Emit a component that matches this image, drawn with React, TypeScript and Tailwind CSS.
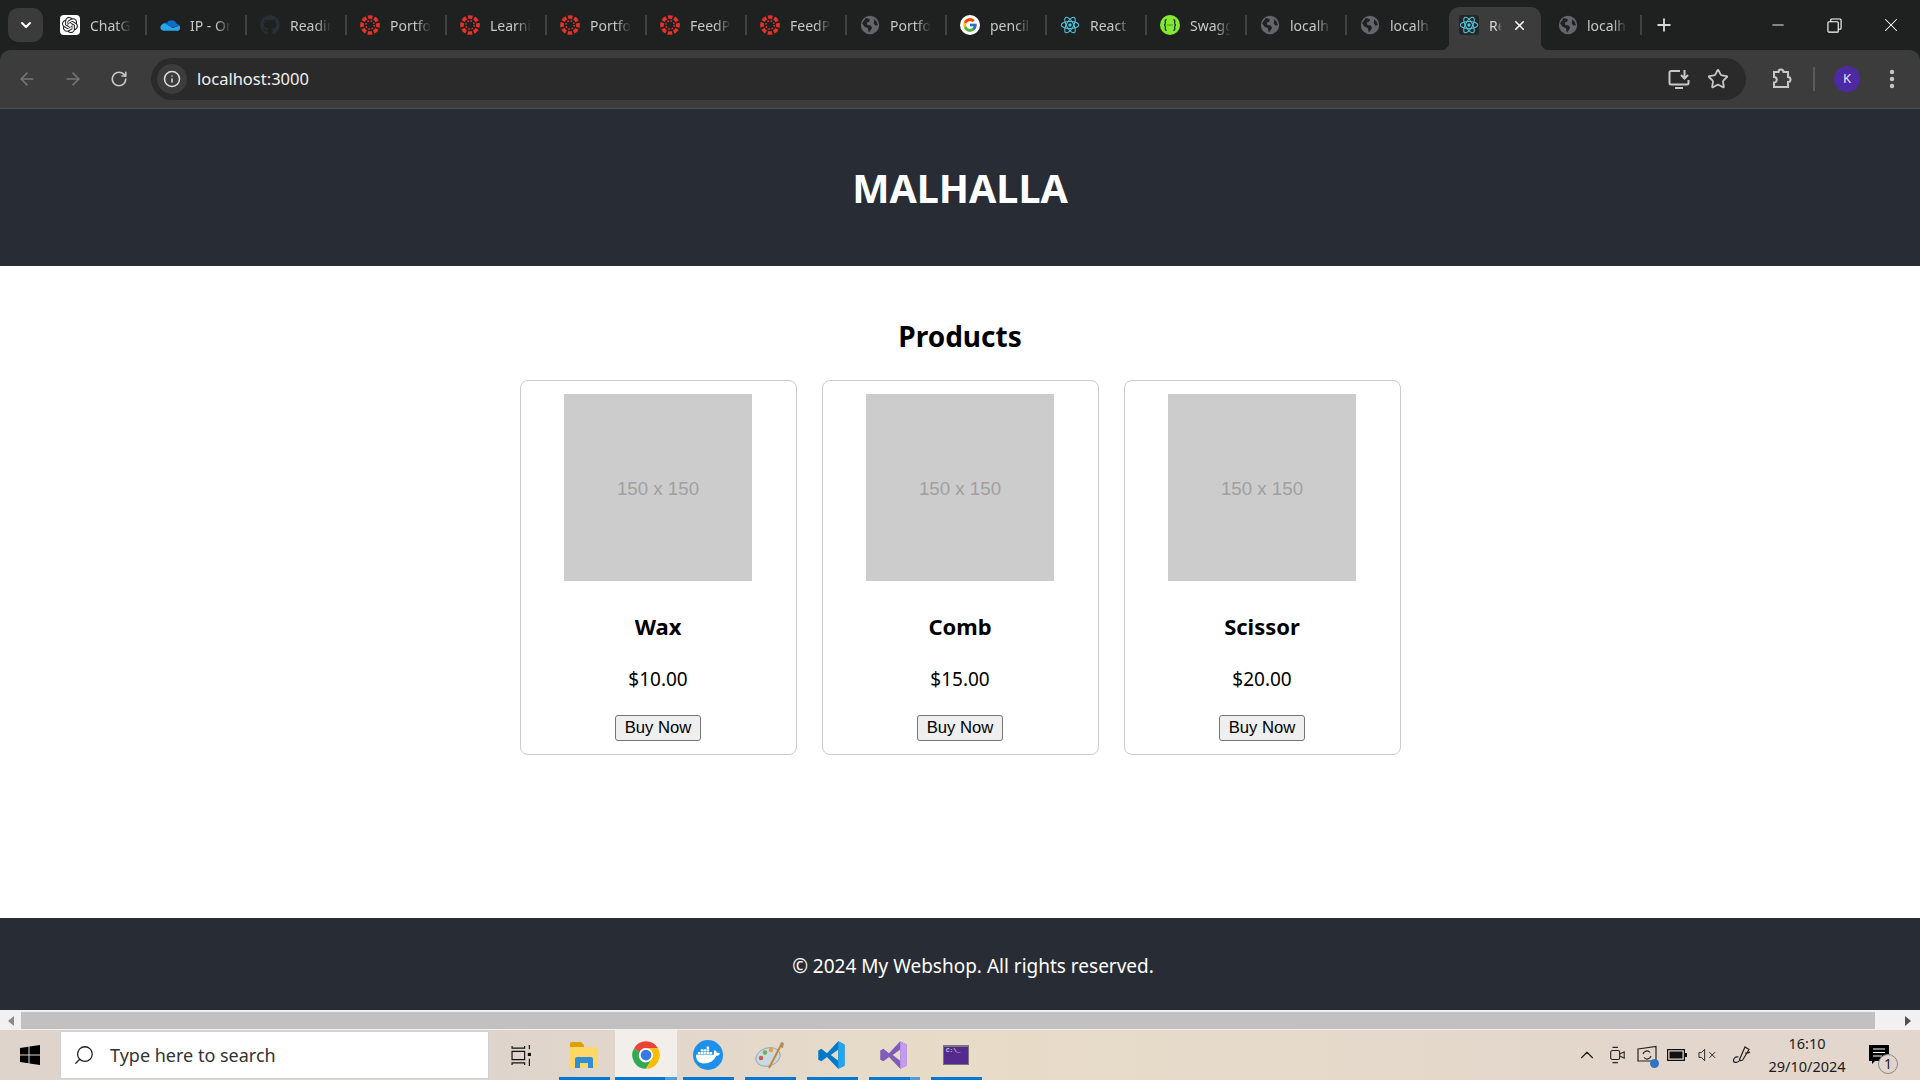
import React from "react";
import { ArrowLeft, ArrowRight, RotateCw, Info, Star, MoreVertical, X, Plus, Minus, ChevronDown, ChevronUp, Search } from "lucide-react";
import { FaDocker, FaGithub } from "react-icons/fa";
import { FcGoogle } from "react-icons/fc";
import { SiOpenai } from "react-icons/si";

type Fav = "gpt" | "onedrive" | "github" | "canvas" | "globe" | "google" | "react" | "swagger";

// labels are what the strip has room for, the rest fades out
const tabs: { label: string; icon: Fav }[] = [
  { label: "ChatG", icon: "gpt" },
  { label: "IP - Or", icon: "onedrive" },
  { label: "Readin", icon: "github" },
  { label: "Portfol", icon: "canvas" },
  { label: "Learnin", icon: "canvas" },
  { label: "Portfol", icon: "canvas" },
  { label: "FeedP", icon: "canvas" },
  { label: "FeedP", icon: "canvas" },
  { label: "Portfol", icon: "globe" },
  { label: "pencil", icon: "google" },
  { label: "React", icon: "react" },
  { label: "Swagg", icon: "swagger" },
  { label: "localh", icon: "globe" },
  { label: "localh", icon: "globe" },
];

const products = [
  { name: "Wax", price: "$10.00" },
  { name: "Comb", price: "$15.00" },
  { name: "Scissor", price: "$20.00" },
];

function ReactIcon() {
  return (
    <svg viewBox="0 0 24 24" className="w-5 h-5" fill="none" stroke="#4fc3dc" strokeWidth="1.3">
      <ellipse cx="12" cy="12" rx="10.5" ry="4.2" />
      <ellipse cx="12" cy="12" rx="10.5" ry="4.2" transform="rotate(60 12 12)" />
      <ellipse cx="12" cy="12" rx="10.5" ry="4.2" transform="rotate(120 12 12)" />
      <circle cx="12" cy="12" r="2" fill="#4fc3dc" stroke="none" />
    </svg>
  );
}

function Favicon({ icon }: { icon: Fav }) {
  if (icon === "gpt") {
    return (
      <div className="w-5 h-5 rounded-[4px] bg-white flex items-center justify-center">
        <SiOpenai className="w-4 h-4 text-[#222]" />
      </div>
    );
  }
  if (icon === "onedrive") {
    return (
      <svg viewBox="0 0 24 24" className="w-5 h-5">
        <path d="M9 8.5a6.5 6.5 0 0 1 11 2.2 4 4 0 0 1 3.5 2.3L14 15 8 11z" fill="#0f6cc9" />
        <path d="M8.5 9a5 5 0 0 0-6 4.5 4 4 0 0 0-2 2.5L11 14z" fill="#0a5fb8" />
        <path d="M6 10.2l9 5.3 8.6-2.6A3.8 3.8 0 0 1 20 19H4.5A4.4 4.4 0 0 1 .5 15.5 5 5 0 0 1 6 10.2z" fill="#28a8ea" />
      </svg>
    );
  }
  if (icon === "github") return <FaGithub className="w-5 h-5 text-[#2a2f36]" />;
  if (icon === "canvas") {
    return (
      <svg viewBox="0 0 24 24" className="w-5 h-5" fill="none" stroke="#e5322a">
        <circle cx="12" cy="12" r="9.6" strokeWidth="4.4" strokeDasharray="5.4 2.14" strokeDashoffset="2.7" />
        <circle cx="12" cy="12" r="5" strokeWidth="1.8" strokeDasharray="1.9 2.03" />
      </svg>
    );
  }
  if (icon === "globe") {
    return (
      <svg viewBox="0 0 24 24" className="w-5 h-5">
        <circle cx="12" cy="12" r="11" fill="#63666b" />
        <path d="M7 3.5l5 1.5-1 3-3 1 1 3 4 .5 1.5 3-2 3.5-2 2-1-5-4-2-3-4zM17 5l3 3 1.5 4-3 1-2-3z" fill="#202222" />
      </svg>
    );
  }
  if (icon === "google") {
    return (
      <div className="w-5 h-5 rounded-full bg-white flex items-center justify-center">
        <FcGoogle className="w-4 h-4" />
      </div>
    );
  }
  if (icon === "react") return <ReactIcon />;
  return (
    <div className="w-5 h-5 rounded-full bg-[#85ea2d] flex items-center justify-center">
      <svg viewBox="0 0 24 24" className="w-4 h-4" fill="none" stroke="#173647" strokeWidth="2">
        <path d="M7 4c-3 0-2 3-2 5s-1 3-2 3c1 0 2 1 2 3s-1 5 2 5M17 4c3 0 2 3 2 5s1 3 2 3c-1 0-2 1-2 3s1 5-2 5" />
        <path d="M8.5 12h1M11.5 12h1M14.5 12h1" />
      </svg>
    </div>
  );
}

function TabStrip() {
  return (
    <div className="h-[50px] flex items-center pl-2 bg-[#1f2121]">
      <div className="w-[35px] h-[34px] rounded-[10px] bg-[#3b3b3b] flex items-center justify-center mr-1">
        <ChevronDown className="w-4 h-4 text-white" strokeWidth={3} />
      </div>
      {tabs.map((t, i) => (
        <div key={i} className="w-[100px] h-[20px] flex items-center pl-[13px] relative">
          <div className="w-5 shrink-0 flex justify-center">
            <Favicon icon={t.icon} />
          </div>
          <span className="ml-[10px] w-[50px] whitespace-nowrap text-[14px] text-[#c7c7c7] [mask-image:linear-gradient(to_right,black_52%,transparent_82%)]">
            {t.label}
          </span>
          {i < tabs.length - 1 && <span className="absolute right-0 top-0 w-[2px] h-[20px] bg-[#3f4040]" />}
        </div>
      ))}
      {/* active tab */}
      <div className="relative ml-[2px] w-[92px] h-[43px] self-end rounded-t-[10px] bg-[#3c3c3c] flex items-center pl-[10px] pb-[7px]">
        <span className="absolute -left-2 bottom-0 w-2 h-2 bg-[radial-gradient(circle_at_0_0,#1f2121_8px,#3c3c3c_8.5px)]" />
        <span className="absolute -right-2 bottom-0 w-2 h-2 bg-[radial-gradient(circle_at_100%_0,#1f2121_8px,#3c3c3c_8.5px)]" />
        <div className="w-5 h-5 shrink-0 rounded-[3px] bg-[#262626] flex items-center justify-center">
          <ReactIcon />
        </div>
        <span className="ml-[10px] w-[20px] whitespace-nowrap text-[14px] text-[#d6d6d6] [mask-image:linear-gradient(to_right,black_35%,transparent_65%)]">
          Re
        </span>
        <X className="w-[15px] h-[15px] ml-[3px] text-white" strokeWidth={2.5} />
      </div>
      <div className="w-[102px] ml-[-1px] h-[20px] flex items-center pl-[18px] relative">
        <Favicon icon="globe" />
        <span className="ml-[9px] w-[50px] whitespace-nowrap text-[14px] text-[#c7c7c7] [mask-image:linear-gradient(to_right,black_52%,transparent_80%)]">
          localh
        </span>
        <span className="absolute right-0 top-0 w-[2px] h-[20px] bg-[#3f4040]" />
      </div>
      <Plus className="w-5 h-5 ml-[12px] text-[#d8d8d8]" strokeWidth={2.2} />
      <div className="ml-auto flex items-center h-full text-white">
        <div className="w-[56px] flex justify-center">
          <Minus className="w-[18px] h-[18px]" strokeWidth={1.2} />
        </div>
        <div className="w-[56px] flex justify-center">
          <svg viewBox="0 0 16 16" className="w-[15px] h-[15px]" fill="none" stroke="currentColor" strokeWidth="1.2">
            <rect x="1" y="4" width="11" height="11" rx="1" />
            <path d="M4 4V2a1 1 0 0 1 1-1h9a1 1 0 0 1 1 1v9a1 1 0 0 1-1 1h-2" />
          </svg>
        </div>
        <div className="w-[58px] flex justify-center">
          <X className="w-[22px] h-[22px]" strokeWidth={1.1} />
        </div>
      </div>
    </div>
  );
}

function Toolbar() {
  return (
    <div className="h-[59px] flex items-center rounded-t-[10px] bg-[#3c3c3c] pl-1 pr-[16px] border-b border-[#4b4f56] text-[#c7c7c7] pb-[1px]">
      <div className="w-[46px] flex justify-center">
        <ArrowLeft className="w-[20px] h-[20px] text-[#757575]" strokeWidth={2} />
      </div>
      <div className="w-[46px] flex justify-center">
        <ArrowRight className="w-[20px] h-[20px] text-[#757575]" strokeWidth={2} />
      </div>
      <div className="w-[46px] flex justify-center">
        <RotateCw className="w-[18px] h-[18px]" strokeWidth={2.2} />
      </div>
      <div className="ml-[9px] flex-1 h-[42px] rounded-full bg-[#2a2a2a] flex items-center pl-[6px] pr-[17px]">
        <div className="w-[30px] h-[30px] rounded-full bg-[#3c3c3c] flex items-center justify-center">
          <Info className="w-[18px] h-[18px] text-[#e0e0e0]" strokeWidth={2} />
        </div>
        <span className="ml-[10px] pt-[2px] text-[16.5px] text-[#f0f0f0]">localhost:3000</span>
        <svg viewBox="0 0 24 24" className="ml-auto w-[24px] h-[24px]" fill="none" stroke="currentColor" strokeWidth="2">
          <path d="M13 4H4a1.5 1.5 0 0 0-1.5 1.5V16A1.5 1.5 0 0 0 4 17.500h16a1.500 1.500 0 0 0 1.500-1.500v-3M8 21h8M17.500 3v8M14 8l3.500 3.500L21 8" />
        </svg>
        <Star className="ml-[16px] w-[22px] h-[22px]" strokeWidth={2} />
      </div>
      <svg viewBox="0 0 24 24" className="ml-[23px] w-[24px] h-[24px]" fill="none" stroke="currentColor" strokeWidth="2">
        <path d="M5 5h4.500a2.500 2.500 0 0 1 5 0H19v5a2.500 2.500 0 0 1 0 5v5H5v-4.500a2.500 2.500 0 0 0 0-5.500z" />
      </svg>
      <span className="ml-[20px] w-[2px] h-[24px] bg-[#5a5a5a]" />
      <div className="ml-[19px] w-[26px] h-[26px] rounded-full bg-[#4d2aa3] flex items-center justify-center text-[13px] text-[#e8e0f8]">
        K
      </div>
      <MoreVertical className="ml-[20px] w-[24px] h-[24px]" strokeWidth={2.4} />
    </div>
  );
}

function ProductCard({ name, price }: { name: string; price: string }) {
  return (
    <div className="w-[277px] h-[375px] border border-[#cccccc] rounded-[8px] flex flex-col items-center pt-[13px]">
      <div className="w-[188px] h-[187px] bg-[#cccccc] flex items-center justify-center pt-[3px] font-['Liberation_Sans',sans-serif] text-[18.7px] text-[#a0a0a0]">
        150 x 150
      </div>
      <h3 className="mt-[29px] text-[22px] leading-[32px] font-bold text-black">{name}</h3>
      <p className="mt-[23px] text-[19px] leading-[28px] text-black">{price}</p>
      <button className="mt-[22px] w-[86px] h-[26px] border border-[#767676] rounded-[3px] bg-[#efefef] font-['Liberation_Sans',sans-serif] text-[16.67px] leading-none text-black">
        Buy Now
      </button>
    </div>
  );
}

function ScrollBar() {
  return (
    <div className="h-[20px] bg-[#f1f1f1] flex pt-[2px] pb-[1px]">
      <div className="w-[21px] flex items-center justify-center">
        <span className="w-0 h-0 border-y-[5px] border-y-transparent border-r-[6px] border-r-[#8a8a8a]" />
      </div>
      <div className="flex-1 bg-[#c1c1c1]" />
      <div className="w-[45px] flex items-center justify-end pr-[9px]">
        <span className="w-0 h-0 border-y-[5px] border-y-transparent border-l-[6px] border-l-[#505050]" />
      </div>
    </div>
  );
}

function AppSlot({ children, active, partial }: { children: React.ReactNode; active?: boolean; partial?: boolean }) {
  return (
    <div className={`relative w-[62px] h-full flex items-center justify-center ${active ? "bg-[#f2eee9]" : ""}`}>
      {children}
      <span className={`absolute bottom-0 h-[3px] bg-[#0078d4] ${active ? "w-[62px]" : "w-[51px]"} ${partial ? "bg-linear-to-r from-[#0078d4] from-80% to-[#4f9fdc] to-80%" : ""}`} />
    </div>
  );
}

function Taskbar() {
  return (
    <div className="h-[50px] flex items-center bg-linear-to-r from-[#dfd4cc] from-25% via-[#e8dcc8] via-50% to-[#e2d6cd] to-90% text-[#1a1a1a]">
      <div className="w-[60px] flex justify-center">
        <svg viewBox="0 0 20 20" className="w-[20px] h-[20px]" fill="#000">
          <path d="M0 3l8.500-1.200V9.500H0zM9.500 1.600L20 0v9.500H9.500zM0 10.500h8.500v7.700L0 17zM9.500 10.500H20V20L9.500 18.400z" />
        </svg>
      </div>
      <div className="w-[429px] h-[48px] bg-white border border-[#d0d0d0] flex items-center pl-[12px]">
        <Search className="w-[22px] h-[22px] -scale-x-100 text-[#222]" strokeWidth={1.4} />
        <span className="ml-[15px] text-[18px] text-[#333]">Type here to search</span>
      </div>
      <div className="w-[64px] flex justify-center">
        <svg viewBox="0 0 20 20" className="w-[21px] h-[21px]" fill="none" stroke="#111" strokeWidth="1.100">
          <path d="M1 1v2h12V1M1 19v-2h12v2M1 6h12v8H1zM17.500 0v4M17.500 13v7" />
          <rect x="16" y="7.500" width="3" height="3" fill="#111" stroke="none" />
        </svg>
      </div>
      <div className="flex h-full">
        <AppSlot>
          <svg viewBox="0 0 30 28" className="w-[30px] h-[28px]">
            <path d="M1 3a2 2 0 0 1 2-2h9l3 3v3H1z" fill="#dca000" />
            <path d="M1 6h27a1 1 0 0 1 1 1v19a1 1 0 0 1-1 1H2a1 1 0 0 1-1-1z" fill="#ffd766" />
            <path d="M6 27v-9a2 2 0 0 1 2-2h14a2 2 0 0 1 2 2v9h-5v-5h-8v5z" fill="#2f8fd6" />
          </svg>
        </AppSlot>
        <AppSlot active partial>
          <svg viewBox="0 0 24 24" className="w-[30px] h-[30px]">
            <path d="M2.470 6.500A11 11 0 0 1 21.530 6.500H12A5.500 5.500 0 0 0 6.800 10z" fill="#ea4335" />
            <path d="M2.470 6.500A11 11 0 0 0 12 23l4.700-8.200A5.500 5.500 0 0 1 6.800 10z" fill="#34a853" />
            <path d="M21.530 6.500A11 11 0 0 1 12 23l4.700-8.200A5.500 5.500 0 0 0 12 6.500z" fill="#fbbc04" />
            <circle cx="12" cy="12" r="5.500" fill="#fff" />
            <circle cx="12" cy="12" r="4.300" fill="#3b78e7" />
          </svg>
        </AppSlot>
        <AppSlot>
          <div className="w-[30px] h-[30px] rounded-full bg-[#1d91ea] flex items-center justify-center">
            <FaDocker className="w-[24px] h-[24px] text-white" />
          </div>
        </AppSlot>
        <AppSlot>
          <svg viewBox="0 0 30 30" className="w-[30px] h-[30px]">
            <ellipse cx="13" cy="17" rx="12.500" ry="9" fill="#c9d9e4" stroke="#8aa0b0" strokeWidth="0.800" transform="rotate(-18 13 17)" />
            <circle cx="6" cy="18" r="2.200" fill="#d9534f" />
            <circle cx="10" cy="12.500" r="2.200" fill="#6cb545" />
            <circle cx="16" cy="10" r="2.200" fill="#f0a030" />
            <path d="M14 28L25 7" stroke="#c98530" strokeWidth="2" />
            <path d="M24 7l2-5 3 1-1 5z" fill="#b09060" />
          </svg>
        </AppSlot>
        <AppSlot>
          <svg viewBox="0 0 24 24" className="w-[30px] h-[30px]">
            <path d="M17 1l-9 9.500L3.500 7 1 8.300v7.400L3.500 17 8 13.500 17 23l5-2.500v-17zM17 7.500v9L11 12z" fill="#0078c8" fillRule="evenodd" />
            <path d="M17 1l5 2.500v17L17 23z" fill="#24a5ec" />
          </svg>
        </AppSlot>
        <AppSlot partial>
          <svg viewBox="0 0 24 24" className="w-[30px] h-[30px]">
            <path d="M17 1l-9 9.500L3.500 7 1 8.300v7.400L3.500 17 8 13.500 17 23l5-2.500v-17zM17 7.500v9L11 12z" fill="#7f5cb8" fillRule="evenodd" />
            <path d="M17 1l5 2.500v17L17 23z" fill="#c39bf0" />
          </svg>
        </AppSlot>
        <AppSlot>
          <div className="w-[26px] h-[20px] bg-[#552a8e] border border-[#77757a] border-t-[2px] flex items-start pl-[2px]">
            <span className="font-['Liberation_Mono',monospace] text-[6px] leading-[8px] text-white">C:\_</span>
          </div>
        </AppSlot>
      </div>
      <div className="ml-auto flex items-center h-full pr-[12px]">
        <div className="w-[30px] flex justify-center">
          <ChevronUp className="w-[22px] h-[22px]" strokeWidth={1.200} />
        </div>
        <div className="w-[30px] flex justify-center">
          <svg viewBox="0 0 20 20" className="w-[18px] h-[18px]" fill="none" stroke="#222" strokeWidth="1.200">
            <rect x="3" y="5" width="10" height="10" rx="2" />
            <path d="M13 9l5-2.500v7L13 11M5 1.500h6M5 18.500h6" />
          </svg>
        </div>
        <div className="relative w-[30px] flex justify-center">
          <svg viewBox="0 0 20 20" className="w-[20px] h-[20px]" fill="none" stroke="#222" strokeWidth="1.200">
            <path d="M1 4l18-2.500V16H1zM6 9a4 4 0 0 1 7-1.500M14 11a4 4 0 0 1-7 1.500" />
          </svg>
          <span className="absolute right-[3px] -bottom-[3px] w-[9px] h-[9px] rounded-full bg-[#2f74c0]" />
        </div>
        <div className="w-[30px] flex justify-center">
          <svg viewBox="0 0 20 12" className="w-[20px] h-[12px]" fill="#111">
            <path d="M0 0h18v4h2v4h-2v4H0zM1.200 1.200v9.600h15.600V1.200zM2.500 2.500h13v7h-13z" fillRule="evenodd" />
          </svg>
        </div>
        <div className="w-[30px] flex justify-center">
          <svg viewBox="0 0 20 14" className="w-[19px] h-[14px]" fill="none" stroke="#222" strokeWidth="1">
            <path d="M1 4.500h2.500L7 1v12L3.500 9.500H1zM12 4l6 6M18 4l-6 6" />
          </svg>
        </div>
        <div className="w-[40px] flex justify-center">
          <svg viewBox="0 0 20 20" className="w-[20px] h-[20px]" fill="none" stroke="#222" strokeWidth="1.200">
            <path d="M13 2l4 2.500-6 10c-1 1.500-3 1.500-3.500 0zM8 15c-2 3-6 3-6.500 1s2-5 5-4M13 8c2 0 4 0 5-1" />
          </svg>
        </div>
        <div className="w-[90px] flex flex-col items-center text-[14.5px] leading-[23px]">
          <span>16:10</span>
          <span>29/10/2024</span>
        </div>
        <div className="relative w-[56px] flex justify-center">
          <svg viewBox="0 0 20 20" className="w-[20px] h-[20px] -translate-x-[1px]" fill="#000">
            <path d="M0 0h20v16H6l-3 3v-3H0z" />
            <path d="M4 4h12M4 7.500h12M4 11h9" stroke="#fff" strokeWidth="1" />
          </svg>
          <span className="absolute left-[26px] top-[9px] w-[20px] h-[20px] rounded-full border border-[#888] bg-[#e0d5cc] flex items-center justify-center text-[14px] leading-none">
            1
          </span>
        </div>
      </div>
    </div>
  );
}

export default function App() {
  return (
    <div className="w-full h-screen overflow-hidden flex flex-col bg-[#1f2121] font-['Noto_Sans',sans-serif]">
      <TabStrip />
      <Toolbar />
      <header className="h-[157px] shrink-0 bg-[#282c34] flex items-center justify-center pt-[3px]">
        <h1 className="text-[39.5px] font-bold text-white">MALHALLA</h1>
      </header>
      <main className="flex-1 bg-white flex flex-col items-center pt-[50px]">
        <h2 className="text-[28px] leading-[40px] font-bold text-black">Products</h2>
        <div className="mt-[24px] flex gap-[25px]">
          {products.map((p) => (
            <ProductCard key={p.name} name={p.name} price={p.price} />
          ))}
        </div>
      </main>
      <footer className="h-[92px] shrink-0 bg-[#282c34] flex items-center justify-center pl-[26px] pt-[4px] text-[19px] text-white">
        © 2024 My Webshop. All rights reserved.
      </footer>
      <ScrollBar />
      <Taskbar />
    </div>
  );
}
